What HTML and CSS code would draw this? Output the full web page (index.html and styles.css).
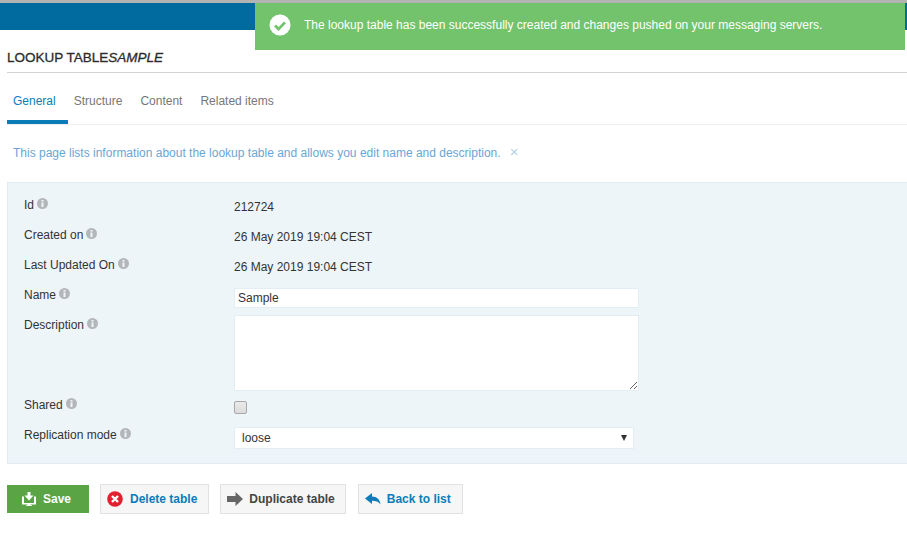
FILE: index.html
```html
<!DOCTYPE html>
<html lang="en">
<head>
    <meta charset="UTF-8">
    <meta name="viewport" content="width=device-width, initial-scale=1.0">
    <title>Lookup table - Sample</title>
    <link rel="stylesheet" href="styles.css">
</head>
<body>
    <div class="topbar"></div>

    <div class="notice">
        <svg class="notice-icon" viewBox="0 0 22 22" width="22" height="22">
            <circle cx="11" cy="11" r="10.500" fill="#fff"/>
            <path d="M6 11.500l3.600 3.600L16 8.400" fill="none" stroke="#72c36c" stroke-width="2.800"/>
        </svg>
        <span>The lookup table has been successfully created and changes pushed on your messaging servers.</span>
    </div>

    <h1 class="title">LOOKUP TABLE<em>SAMPLE</em></h1>

    <div class="tabs">
        <a class="tab active">General</a>
        <a class="tab">Structure</a>
        <a class="tab">Content</a>
        <a class="tab">Related items</a>
    </div>

    <p class="hint">This page lists information about the lookup table and allows you edit name and description.<span class="hint-close">×</span></p>

    <svg class="sprites" width="0" height="0">
        <symbol id="info" viewBox="0 0 11 11">
            <circle cx="5.500" cy="5.500" r="5.500" fill="#b4b7b9"/>
            <rect x="4.500" y="2" width="2" height="1.600" fill="#eef5f9"/>
            <rect x="4.500" y="4.500" width="2" height="4.500" fill="#eef5f9"/>
        </symbol>
    </svg>

    <form class="panel">
        <div class="row row-text">
            <label>Id <svg class="info"><use href="#info"/></svg></label>
            <div class="value">212724</div>
        </div>
        <div class="row row-text">
            <label>Created on <svg class="info"><use href="#info"/></svg></label>
            <div class="value">26 May 2019 19:04 CEST</div>
        </div>
        <div class="row row-text">
            <label>Last Updated On <svg class="info"><use href="#info"/></svg></label>
            <div class="value">26 May 2019 19:04 CEST</div>
        </div>
        <div class="row row-name">
            <label>Name <svg class="info"><use href="#info"/></svg></label>
            <input class="field" type="text" value="Sample">
        </div>
        <div class="row row-desc">
            <label>Description <svg class="info"><use href="#info"/></svg></label>
            <textarea class="field area"></textarea>
        </div>
        <div class="row row-shared">
            <label>Shared <svg class="info"><use href="#info"/></svg></label>
            <input class="check" type="checkbox">
        </div>
        <div class="row row-mode">
            <label>Replication mode <svg class="info"><use href="#info"/></svg></label>
            <div class="select-wrap">
                <select class="select"><option>loose</option></select>
                <span class="select-arrow"></span>
            </div>
        </div>
    </form>

    <div class="actions">
        <button class="btn btn-save" type="button">
            <svg viewBox="0 0 14 14" width="14" height="14">
                <path d="M5.500 0h3v3.500H11.500L7 8.500 2.500 3.500h3z" fill="#fff"/>
                <path d="M0 4.500h2v6.500h10V4.500h2v8H8.500v.7H10v.8H4v-.8h1.500v-.7H0z" fill="#fff"/>
            </svg>
            Save
        </button>
        <button class="btn btn-light btn-blue" type="button">
            <svg viewBox="0 0 17 16" width="17" height="16">
                <circle cx="8" cy="8" r="7.800" fill="#e3202f"/>
                <path d="M5 5l6 6M11 5l-6 6" stroke="#fff" stroke-width="2.400"/>
            </svg>
            Delete table
        </button>
        <button class="btn btn-light btn-dark" type="button">
            <svg viewBox="0 0 16 14" width="16" height="14">
                <path d="M0 4h8.500V0L16 7l-7.500 7v-4H0z" fill="#666"/>
            </svg>
            Duplicate table
        </button>
        <button class="btn btn-light btn-blue" type="button">
            <svg viewBox="0 0 16 12" width="16" height="12">
                <path d="M0 5.500L7 0v3.500c5 0 8 3 8.500 8-1.800-2.800-4.500-3.800-8.500-3.800V11z" fill="#0a7db8"/>
            </svg>
            Back to list
        </button>
    </div>
</body>
</html>
```

FILE: styles.css
```css
* { box-sizing: border-box; }
body {
    margin: 0;
    font-family: "Liberation Sans", Arial, sans-serif;
    font-size: 12px;
    color: #333;
    background-color: white;
}
.sprites { position: absolute; }

.topbar {
    height: 30px;
    background-color: #016a9e;
    border-top: 3px solid #b3b3b3;
}
.notice {
    position: absolute;
    top: 3px;
    left: 255px;
    width: 650px;
    height: 47px;
    padding: 0 0 3px 14px;
    display: flex;
    align-items: center;
    gap: 13px;
    background-color: #72c36c;
    color: white;
}

.title {
    margin: 0 0 0 7px;
    height: 43px;
    padding-top: 20px;
    border-bottom: 1px solid #d0d2d3;
    font-size: 13.5px;
    line-height: 16px;
    font-weight: normal;
    color: #2b2b2b;
    -webkit-text-stroke: 0.3px #2b2b2b;
}

.tabs {
    margin-left: 7px;
    height: 52px;
    display: flex;
    border-bottom: 1px solid #eee;
}
.tab {
    padding: 21px 12px 0 6px;
    color: #777;
    height: 51px;
    line-height: 14px;
}
.tab.active {
    color: #0a7db8;
    border-bottom: 4px solid #0a7db8;
}

.hint {
    margin: 19px 0 0 13px;
    height: 15px;
    line-height: 15px;
    color: #6aa6d6;
}
.hint-close {
    margin-left: 9px;
    color: #b5cfe4;
    font-size: 15px;
}

.panel {
    margin: 23px 0 0 7px;
    height: 282px;
    padding: 12px 0 0 16px;
    background-color: #eef5f9;
    border: 1px solid #e0ebf2;
    border-right: none;
}
.row {
    display: grid;
    grid-template-columns: 210px auto;
    justify-content: start;
    align-items: start;
}
.row label {
    display: flex;
    align-items: center;
    gap: 3px;
    height: 16px;
    margin-top: 2px;
}
.info {
    width: 11px;
    height: 11px;
    margin-top: -3px;
}
.row-text { height: 30px; }
.value {
    margin-top: 4px;
    line-height: 16px;
}
.row-name { height: 30px; }
.row-desc { height: 80px; }
.row-shared { height: 30px; }
.row-mode { height: 30px; }

.field {
    display: block;
    width: 405px;
    height: 20px;
    padding: 1px 3px;
    margin: 0;
    background-color: white;
    border: 1px solid #e3edf4;
    font: 12px "Liberation Sans", Arial, sans-serif;
    color: #333;
    outline: none;
}
.row-name .field { margin-top: 3px; }
.area { height: 76px; }
.check {
    width: 13px;
    height: 13px;
    margin: 6px 0 0;
    appearance: none;
    background: linear-gradient(#eaeaea, #dcdcdc);
    border: 1px solid #a8a8a8;
    border-radius: 2px;
}
.select-wrap {
    position: relative;
    width: 400px;
    margin-top: 2px;
}
.select {
    display: block;
    width: 100%;
    height: 22px;
    padding: 0 0 0 7px;
    appearance: none;
    background-color: white;
    border: 1px solid #e3edf4;
    font: 12px "Liberation Sans", Arial, sans-serif;
    color: #333;
}
.select-arrow {
    position: absolute;
    top: 8px;
    right: 7px;
    border-left: 3px solid transparent;
    border-right: 3px solid transparent;
    border-top: 6px solid #333;
}

.actions {
    margin: 20px 0 0 7px;
    display: flex;
    align-items: center;
    gap: 11px;
}
.btn {
    display: flex;
    align-items: center;
    gap: 6px;
    height: 30px;
    padding: 0 11px 0 6px;
    background-color: #f6f6f6;
    border: 1px solid #e2e2e2;
    font: bold 12px "Liberation Sans", Arial, sans-serif;
}
.btn-save {
    height: 28px;
    width: 82px;
    padding-left: 15px;
    gap: 7px;
    background-color: #5aa445;
    border: none;
    color: white;
}
.btn-blue { color: #0a7db8; }
.btn-dark {
    padding-right: 10px;
    margin-right: 1px;
    color: #444;
}
```
